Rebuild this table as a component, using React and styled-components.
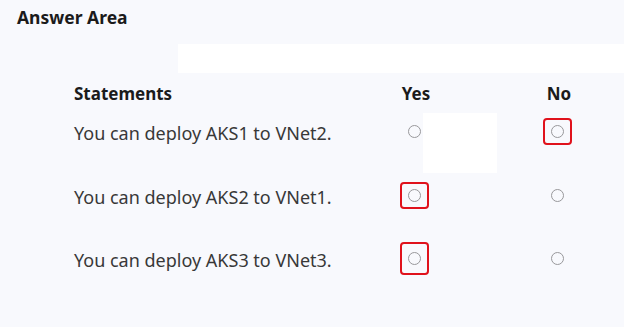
import React from 'react'
import styled, { createGlobalStyle } from 'styled-components'

const GlobalStyle = createGlobalStyle`
    body {
        margin: 0;
        background: #f8f9fd;
        font-family: "Noto Sans", "Open Sans", sans-serif;
    }
`

const Page = styled.div`
    width: 624px;
    height: 327px;
    overflow: hidden;
    background: #f8f9fd;
`
const Title = styled.h2`
    margin: 0;
    padding: 6px 0 0 17px;
    height: 22px;
    line-height: 22px;
    font-size: 17.5px;
    font-weight: 700;
    color: #1b1b1b;
`
const Blank = styled.div`
    margin: 16px 0 0 178px;
    height: 29px;
    background: #ffffff;
`
const Table = styled.div`
    position: relative;
    margin-top: 10px;
    padding-left: 74px;
`
const Row = styled.div`
    display: grid;
    grid-template-columns: 237px 80px 80px;
    column-gap: 63px;
    align-items: center;
    height: 22px;
    line-height: 22px;
    white-space: nowrap;
`
const Rows = styled.div`
    display: flex;
    flex-direction: column;
    gap: 41.5px;
    padding-top: 17px;
`
const Heading = styled.div`
    font-size: 17px;
    font-weight: 700;
    color: #1b1b1b;
    text-align: ${({center}) => center ? 'center' : 'left'};
    padding-left: ${({center}) => center ? '4px' : '0'};
`
const Statement = styled.div`
    font-size: 18px;
    color: #383838;
`
const Cell = styled.div`
    display: flex;
    justify-content: center;
    align-items: center;
    margin-top: -3px;
`
const Radio = styled.span`
    display: block;
    width: 11px;
    height: 11px;
    border: 1.8px solid #98989b;
    border-radius: 50%;
`
const Mark = styled.span`
    display: inline-flex;
    padding: ${({tall}) => tall ? '8px 6px' : '5px 6px'};
    border: 2px solid #e0121c;
    border-radius: 4px;
    margin: -20px 0;
`
const Cover = styled.div`
    position: absolute;
    left: 423px;
    top: 30px;
    width: 74px;
    height: 60px;
    background: #ffffff;
`

const rows = [
    { text: 'You can deploy AKS1 to VNet2.', answer: 'no' },
    { text: 'You can deploy AKS2 to VNet1.', answer: 'yes' },
    { text: 'You can deploy AKS3 to VNet3.', answer: 'yes', tall: true },
]

const Choice = ({ marked, tall }) => (
    <Cell>
        {marked ? <Mark tall={tall}><Radio /></Mark> : <Radio />}
    </Cell>
)

const App = () => {
  return (
    <Page>
        <GlobalStyle />
        <Title>Answer Area</Title>
        <Blank />
        <Table>
            <Row>
                <Heading>Statements</Heading>
                <Heading center>Yes</Heading>
                <Heading center>No</Heading>
            </Row>
            <Rows>
                {rows.map(r => (
                    <Row key={r.text}>
                        <Statement>{r.text}</Statement>
                        <Choice marked={r.answer === 'yes'} tall={r.tall} />
                        <Choice marked={r.answer === 'no'} />
                    </Row>
                ))}
            </Rows>
            <Cover />
        </Table>
    </Page>
  )
}

export default App
